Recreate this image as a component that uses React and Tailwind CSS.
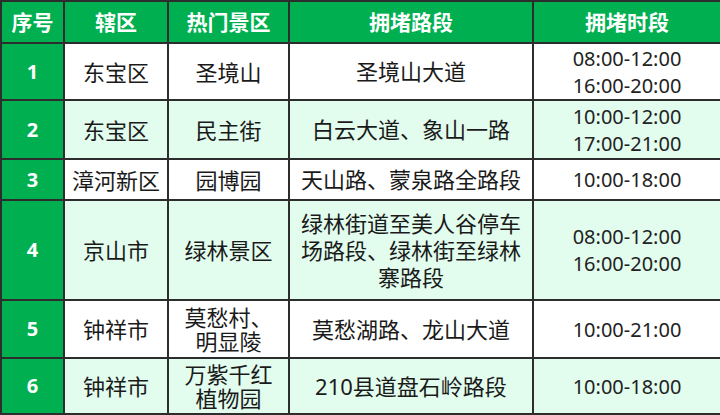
import React from 'react';

const rows = [
  { no: '1', area: '东宝区', spot: ['圣境山'], road: ['圣境山大道'], time: ['08:00-12:00', '16:00-20:00'], h: 'h-[57px]' },
  { no: '2', area: '东宝区', spot: ['民主街'], road: ['白云大道、象山一路'], time: ['10:00-12:00', '17:00-21:00'], h: 'h-[59px]' },
  { no: '3', area: '漳河新区', spot: ['园博园'], road: ['天山路、蒙泉路全路段'], time: ['10:00-18:00'], h: 'h-[41px]' },
  {
    no: '4',
    area: '京山市',
    spot: ['绿林景区'],
    road: ['绿林街道至美人谷停车', '场路段、绿林街至绿林', '寨路段'],
    time: ['08:00-12:00', '16:00-20:00'],
    h: 'h-[100px]',
  },
  { no: '5', area: '钟祥市', spot: ['莫愁村、', '明显陵'], road: ['莫愁湖路、龙山大道'], time: ['10:00-21:00'], h: 'h-[58px]' },
  { no: '6', area: '钟祥市', spot: ['万紫千红', '植物园'], road: ['210县道盘石岭路段'], time: ['10:00-18:00'], h: 'h-[56px]' },
];

const Lines = ({ items, lead }) => (
  <div className={lead}>
    {items.map((t, i) => (
      <div key={i}>{t}</div>
    ))}
  </div>
);

const cell = 'border-2 border-[#2d2d2d] p-0';

export default function App() {
  return (
    <div className="w-[720px] h-[415px] bg-white overflow-hidden font-['Noto_Sans','Noto_Sans_CJK_SC',sans-serif]">
      <table className="w-[720px] table-fixed border-collapse text-center text-[#1a1a1a]">
        <colgroup>
          <col className="w-[63px]" />
          <col className="w-[104px]" />
          <col className="w-[121px]" />
          <col className="w-[244px]" />
          <col className="w-[188px]" />
        </colgroup>
        <thead>
          <tr className="h-[42px] bg-[#00b050] text-white font-bold text-[21px] leading-[26px]">
            <th className={cell}>序号</th>
            <th className={cell}>辖区</th>
            <th className={cell}>热门景区</th>
            <th className={cell}>拥堵路段</th>
            <th className={cell}>拥堵时段</th>
          </tr>
        </thead>
        <tbody>
          {rows.map((r, i) => (
            <tr key={r.no} className={`${r.h} ${i % 2 === 1 ? 'bg-[#e2fcee]' : 'bg-white'}`}>
              <td className={`${cell} bg-[#00b050] text-white font-bold text-[20px] leading-[24px]`}>{r.no}</td>
              <td className={`${cell} text-[22px] leading-[26px]`}>{r.area}</td>
              <td className={`${cell} text-[22px]`}>
                <Lines items={r.spot} lead="leading-[24px]" />
              </td>
              <td className={`${cell} text-[22px]`}>
                <Lines items={r.road} lead="leading-[27px]" />
              </td>
              <td className={`${cell} text-[20px] text-[#222]`}>
                <Lines items={r.time} lead="leading-[27px]" />
              </td>
            </tr>
          ))}
        </tbody>
      </table>
    </div>
  );
}
